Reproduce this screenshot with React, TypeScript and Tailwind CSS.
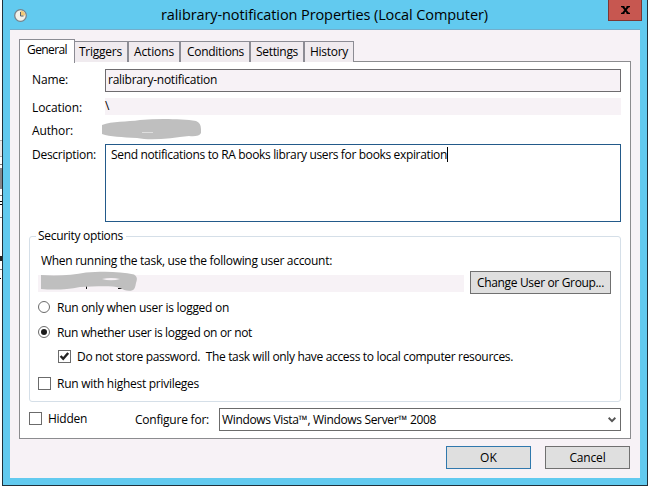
import { useLayoutEffect, useRef, useState } from "react";
import type { ReactNode } from "react";

/** A line of dialog text whose tracking is adjusted so that it spans `w` pixels. */
function Label({ w, children, className = "leading-[18px]" }: { w: number; children: string; className?: string }) {
  const ref = useRef<HTMLSpanElement>(null);
  const [spacing, setSpacing] = useState(0);
  useLayoutEffect(() => {
    const el = ref.current;
    if (!el) return;
    setSpacing((s) => s + (w - el.getBoundingClientRect().width) / children.length);
  }, [w, children]);
  return (
    <span
      ref={ref}
      className={`inline-block shrink-0 self-start whitespace-pre ${className}`}
      style={{ letterSpacing: `${spacing}px` }}
    >
      {children}
    </span>
  );
}

function Tab({ label, w, className }: { label: string; w: number; className: string }) {
  return (
    <div className={`flex h-[21px] border border-b-0 border-[#8c8c94] bg-[#f0ebef] pt-px ${className}`}>
      <Label w={w}>{label}</Label>
    </div>
  );
}

function Check({ checked = false, className = "" }: { checked?: boolean; className?: string }) {
  return (
    <span className={`size-[13px] shrink-0 border border-[#6b6b6b] bg-white ${className}`}>
      {checked && (
        <svg viewBox="0 0 11 11" className="block size-[11px]">
          <path d="M1.6 5 L4.2 7.8 L9.2 2" fill="none" stroke="#222" strokeWidth="2.4" />
        </svg>
      )}
    </span>
  );
}

function Radio({ checked = false }: { checked?: boolean }) {
  return (
    <span className="mt-[2px] flex size-[12px] shrink-0 items-center justify-center rounded-full border border-[#6b6b6b] bg-white">
      {checked && <span className="size-[6px] rounded-full bg-[#1c1c1c]" />}
    </span>
  );
}

function Button({ children, className }: { children: ReactNode; className: string }) {
  return (
    <button className={`flex h-[23px] shrink-0 justify-center border bg-[#dfdfdf] pt-[2px] ${className}`}>{children}</button>
  );
}

function TitleBar() {
  return (
    <header className="flex h-[29px] items-start">
      <svg viewBox="0 0 13 13" className="ml-[11px] mt-[9px] size-[13px]">
        <circle cx="6.5" cy="6.5" r="5.8" fill="#f2f1ea" stroke="#78838b" strokeWidth="1.3" />
        <path d="M6.5 6.5 V1.7 A4.8 4.8 0 0 1 11.3 6.5 Z" fill="#f4c978" />
        <path d="M6.5 3 V7 H9.5" fill="none" stroke="#53606b" strokeWidth="1" />
      </svg>
      <Label w={327} className="ml-[134px] mt-[5px] text-[14.5px] leading-5">
        ralibrary-notification Properties (Local Computer)
      </Label>
      <button className="ml-auto mr-[5px] flex h-[21px] w-[34px] items-center justify-center border border-t-0 border-[#7c3733] bg-[#c75750]">
        <svg viewBox="0 0 9 8" className="h-[8px] w-[9px]">
          <path d="M0 .6 H3.4 M5.6 .6 H9 M0 7.4 H3.4 M5.6 7.4 H9" fill="none" stroke="#000" strokeWidth="1.2" />
          <path d="M1.8 .5 L7.2 7.5 M7.2 .5 L1.8 7.5" fill="none" stroke="#000" strokeWidth="2" />
        </svg>
      </button>
    </header>
  );
}

function SecurityOptions() {
  return (
    <section className="ml-[9px] mt-[14px] flex h-[166px] w-[592px] flex-col rounded-[3px] border border-[#d5dfe8]">
      <div className="-mt-[10px] ml-[6px] flex h-4 w-[90px] bg-white pl-[2px]">
        <Label w={85}>Security options</Label>
      </div>
      <div className="ml-[11px] mt-[9px] flex h-4">
        <Label w={291}>When running the task, use the following user account:</Label>
      </div>
      <div className="ml-[8px] mt-[3px] flex h-[23px]">
        <div className="mt-[4px] h-[17px] w-[426px] bg-[#f7f2f6]">
          <svg viewBox="0 0 100 21" className="-mt-[4px] block h-[21px] w-[100px]">
            <path d="M48.5 15 v3 M80 17.5 h4" stroke="#111" strokeWidth="1" />
            <path d="M3 4 C20 5 35 4 48 1.5 C62 .2 82 0 96 3.5 C100 6 99 9 98 12 Q97 18 95 19 C90 21 86 19 82 17 C72 14 55 16 42 16 C28 19 15 19 3 18 Z" fill="#bfbfbf" />
            <path d="M64 8 Q73 6 82 8 Q73 10.5 64 8" fill="#f7f2f6" />
          </svg>
        </div>
        <Button className="ml-[6px] w-[141px] border-[#707070]">
          <Label w={127}>Change User or Group...</Label>
        </Button>
      </div>
      <div className="ml-[8px] mt-[5px] flex h-4">
        <Radio />
        <Label w={172} className="ml-[7px] leading-[18px]">Run only when user is logged on</Label>
      </div>
      <div className="ml-[8px] mt-[9px] flex h-4">
        <Radio checked />
        <Label w={195} className="ml-[7px] leading-[18px]">Run whether user is logged on or not</Label>
      </div>
      <div className="ml-[28px] mt-[8px] flex h-4">
        <Check checked className="mt-[2px]" />
        <Label w={436} className="ml-[6px] leading-[18px]">{"Do not store password.  The task will only have access to local computer resources."}</Label>
      </div>
      <div className="ml-[8px] mt-[11px] flex h-4">
        <Check className="mt-[2px]" />
        <Label w={142} className="ml-[6px] leading-[18px]">Run with highest privileges</Label>
      </div>
    </section>
  );
}

function GeneralPanel() {
  return (
    <main className="-mt-px h-[378px] w-[612px] border border-[#8c8c8f] bg-white">
      <div className="ml-[12px] mt-[7px] flex h-[23px]">
        <div className="flex w-[73px] pt-[2px]"><Label w={36}>Name:</Label></div>
        <div className="flex w-[516px] border border-[#6e6c6f] bg-[#f7f2f6] pl-[2px] pt-px">
          <Label w={109}>ralibrary-notification</Label>
        </div>
      </div>
      <div className="ml-[12px] mt-[6px] flex h-[17px]">
        <div className="flex w-[73px] pt-px"><Label w={50}>Location:</Label></div>
        <div className="flex w-[516px] bg-[#f7f2f6]"><Label w={5} className="leading-4">\</Label></div>
      </div>
      <div className="ml-[12px] mt-[4px] flex h-[21px]">
        <div className="flex w-[70px] pt-[3px]"><Label w={41}>Author:</Label></div>
        <svg viewBox="0 0 99 21" className="h-[21px] w-[99px]">
          <path d="M0 6 C10 2 25 3 38 1 C58 -.6 80 0 94 2 Q99 4 99 10 V14 Q97 18 87 17 C70 19 50 22 35 19 C20 18 8 18 0 15 Z" fill="#bfbfbf" />
          <path d="M40 13.5 H51" stroke="#dedede" strokeWidth="1" />
        </svg>
      </div>
      <div className="ml-[12px] mt-[4px] flex h-[78px]">
        <div className="flex w-[73px] pt-[2px]"><Label w={64}>Description:</Label></div>
        <div className="flex w-[516px] border border-[#235a8a] pl-[5px] pt-px">
          <Label w={336}>Send notifications to RA books library users for books expiration</Label>
          <span className="mt-px h-[15px] w-px bg-black" />
        </div>
      </div>
      <SecurityOptions />
      <div className="ml-[9px] mt-[6px] flex h-[24px]">
        <Check className="mt-[4px]" />
        <Label w={39} className="ml-[6px] mt-[2px] leading-[18px]">Hidden</Label>
        <div className="ml-[48px] flex w-[84px] pt-[3px]"><Label w={74}>Configure for:</Label></div>
        <div className="flex h-[23px] w-[402px] justify-between border border-[#6b6b6b] pl-[2px] pr-[4px] pt-[2px]">
          <Label w={214}>Windows Vista™, Windows Server™ 2008</Label>
          <svg viewBox="0 0 8 6" className="mt-[6px] h-[6px] w-[8px]">
            <path d="M.6 .8 L4 4.2 L7.4 .8" fill="none" stroke="#555" strokeWidth="2" />
          </svg>
        </div>
      </div>
    </main>
  );
}

export default function App() {
  return (
    <div className="flex h-[486px] w-[648px] overflow-hidden bg-white font-['Open_Sans','Noto_Sans',sans-serif] text-[12px] text-black">
      <div className="w-[2px] shrink-0 pt-[140px]">
        <div className="h-[17px] border-y border-[#b0adad] bg-[#ece9e9]" />
        <div className="mt-[7px] h-px bg-[#777]" />
        <div className="mt-[3px] h-[21px] bg-[#88868a]" />
        <div className="mt-[6px] h-px bg-[#777]" />
        <div className="mt-[5px] h-[4px] border-y border-black" />
        <div className="mt-[12px] h-px bg-[#777]" />
        <div className="mt-[38px] h-[5px] bg-[#222]" />
        <div className="mt-[8px] h-px bg-[#777]" />
        <div className="mt-[8px] h-px w-px bg-black" />
      </div>
      <div className="flex w-[646px] flex-col border border-t-0 border-[#20303a] bg-[#62caef]">
        <TitleBar />
        <div className="mx-[7px] h-[449px] border-t border-[#73aecb] bg-[#f7f2f6] pl-[9px] pt-[9px]">
          <nav className="flex h-[23px] items-start">
            <div className="relative z-10 flex h-[24px] w-[56px] border border-b-0 border-[#8c8c94] bg-white pl-[7px] pt-px">
              <Label w={40}>General</Label>
            </div>
            <div className="flex pt-[2px]">
              <Tab label="Triggers" w={43} className="w-[53px] border-l-0 pl-[4px]" />
              <Tab label="Actions" w={40} className="w-[52px] pl-[5px]" />
              <Tab label="Conditions" w={57} className="w-[70px] pl-[6px]" />
              <Tab label="Settings" w={42} className="w-[54px] pl-[5px]" />
              <Tab label="History" w={38} className="w-[50px] pl-[5px]" />
            </div>
          </nav>
          <GeneralPanel />
          <footer className="mt-[7px] flex">
            <Button className="ml-[427px] w-[85px] border-[#3078ad]"><Label w={17}>OK</Label></Button>
            <Button className="ml-[14px] w-[85px] border-[#707070]"><Label w={36}>Cancel</Label></Button>
          </footer>
        </div>
      </div>
    </div>
  );
}
